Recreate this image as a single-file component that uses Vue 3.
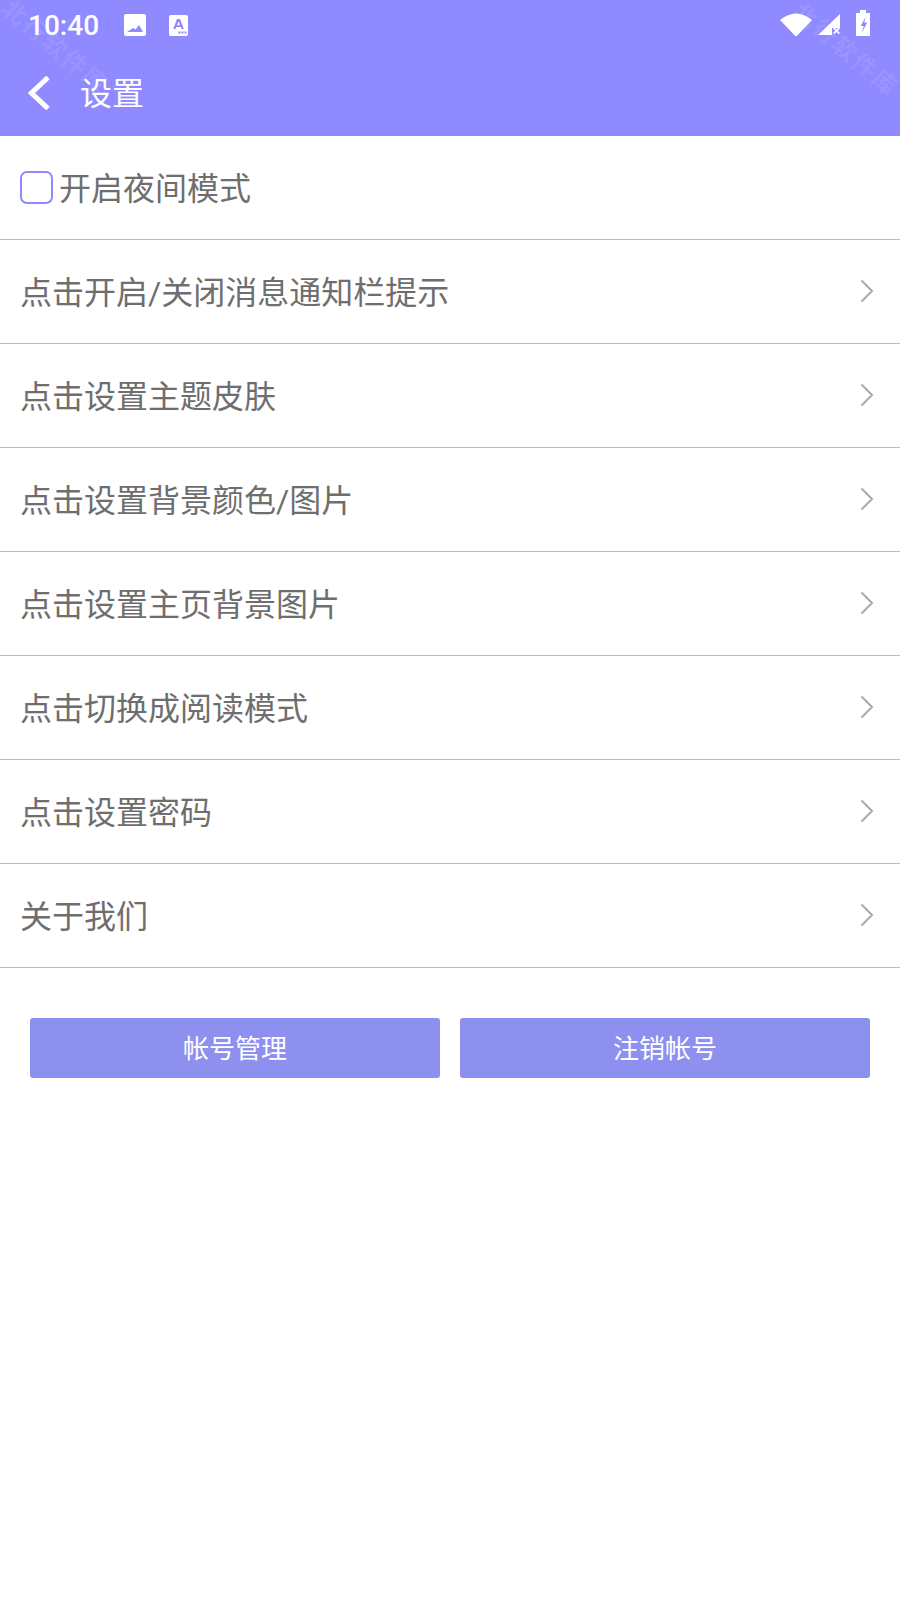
<template>
  <div class="page">
    <header class="top">
      <div class="status">
        <span class="time">10:40</span>
        <svg class="ic-pic" viewBox="0 0 22 22"><path fill-rule="evenodd" fill="#fff" d="M2 0h18a2 2 0 0 1 2 2v18a2 2 0 0 1-2 2H2a2 2 0 0 1-2-2V2a2 2 0 0 1 2-2zM3 18h16l-4-7-3.500 4.500-2.500-1.500z"/></svg>
        <svg class="ic-note" viewBox="0 0 19 21"><path fill-rule="evenodd" fill="#fff" d="M2 0h15a2 2 0 0 1 2 2v17a2 2 0 0 1-2 2H2a2 2 0 0 1-2-2V2a2 2 0 0 1 2-2zM8 4l-3.800 10h2.300l.7-2h4.600l.7 2h2.300L11 4zM9.500 6.600l1.600 3.600H8zM9.500 16.500h2v2h-2zM12.500 16.500h2v2h-2zM15.500 16.500h2v2h-2z"/></svg>
        <span class="grow"></span>
        <svg class="ic-wifi" viewBox="0 0 32 24"><path fill="#fff" d="M0 8Q16-5 32 8L17.500 23.300a2 2 0 0 1-3 0z"/></svg>
        <svg class="ic-signal" viewBox="0 0 22 22"><path fill="#fff" d="M22 0v14h-8v7H0z"/><path fill="#fff" d="M15 14.500l1.200-1.200 2.300 2.300 2.300-2.300 1.200 1.200-2.300 2.300 2.300 2.300-1.200 1.200-2.300-2.300-2.300 2.300-1.200-1.200 2.300-2.300z"/></svg>
        <svg class="ic-batt" viewBox="0 0 14 26"><path fill-rule="evenodd" fill="#fff" d="M4 0h6v3h4v23H0V3h4zM10 6.500L4.700 16h3l-2 7 5.500-10.500h-3z"/></svg>
      </div>
      <div class="bar">
        <svg class="back" viewBox="0 0 22 34"><path d="M20 1.500L3.500 17 20 32.500" fill="none" stroke="#fff" stroke-width="5"/></svg>
        <span class="title">设置</span>
      </div>
    </header>

    <div class="row">
      <span class="check"></span>
      <span class="label">开启夜间模式</span>
    </div>
    <div v-for="item in items" :key="item" class="row">
      <span class="label">{{ item }}</span>
      <svg class="arrow" viewBox="0 0 14 24"><path d="M1.500 1.500L12 12 1.500 22.500" fill="none" stroke="#aaa" stroke-width="2"/></svg>
    </div>

    <div class="actions">
      <button class="btn">帐号管理</button>
      <button class="btn">注销帐号</button>
    </div>

    <!-- 水印 -->
    <span class="mark mark-left">北行软件库</span>
    <span class="mark mark-right">北行软件库</span>
  </div>
</template>

<script setup>
const items = [
  '点击开启/关闭消息通知栏提示',
  '点击设置主题皮肤',
  '点击设置背景颜色/图片',
  '点击设置主页背景图片',
  '点击切换成阅读模式',
  '点击设置密码',
  '关于我们'
]
</script>

<style scoped>
.page {
  position: relative;
  width: 900px;
  height: 1600px;
  overflow: hidden;
  background: #fff;
  font-family: Roboto, "Noto Sans CJK SC", sans-serif;
}
.top {
  height: 136px;
  background: #8f8aff;
  color: #fff;
}
.status {
  height: 50px;
  display: flex;
  align-items: center;
  padding: 0 30px 0 28px;
}
.time {
  font-size: 28px;
  font-weight: 500;
  margin-right: 25px;
}
.ic-pic { width: 22px; height: 22px; margin-right: 23px; }
.ic-note { width: 19px; height: 21px; }
.grow { flex: 1; }
.ic-wifi { width: 32px; height: 24px; margin: 0 6px 2px 0; }
.ic-signal { width: 22px; height: 22px; margin-right: 16px; }
.ic-batt { width: 14px; height: 26px; margin-bottom: 4px; }
.bar {
  height: 86px;
  display: flex;
  align-items: center;
  padding-left: 28px;
}
.back { width: 22px; height: 34px; margin: 0 30px 1px 0; }
.title { font-size: 32px; margin-bottom: 4px; }
.row {
  height: 104px;
  box-sizing: border-box;
  border-bottom: 1px solid #bbb;
  display: flex;
  align-items: center;
  justify-content: space-between;
  padding: 0 26px 0 20px;
  font-size: 32px;
  color: #6e6e6e;
}
.row:first-of-type { justify-content: flex-start; }
.label { margin-bottom: 4px; }
.check {
  width: 33px;
  height: 33px;
  box-sizing: border-box;
  border: 2px solid #8f8aff;
  border-radius: 7px;
  margin-right: 6px;
}
.arrow { width: 14px; height: 24px; margin-bottom: 2px; }
.actions {
  display: flex;
  gap: 20px;
  padding: 50px 30px 0;
}
.btn {
  flex: 1;
  height: 60px;
  padding: 0 0 4px;
  border: 0;
  border-radius: 3px;
  background: #8d90ee;
  color: #fff;
  font-family: inherit;
  font-size: 26px;
}
.mark {
  position: absolute;
  font-size: 24px;
  line-height: 30px;
  font-weight: 700;
  color: rgba(255, 255, 255, 0.09);
  transform: rotate(40deg);
  white-space: nowrap;
  letter-spacing: 2px;
}
.mark-left { left: -10px; top: 32px; }
.mark-right { left: 780px; top: 35px; }
</style>
